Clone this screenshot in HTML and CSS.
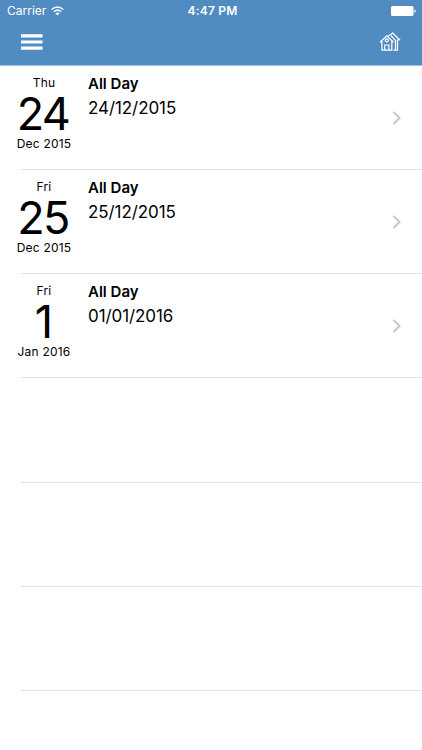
FILE: index.html
```html
<!DOCTYPE html>
<html lang="en">
<head>
<meta charset="utf-8">
<title>Events</title>
<link rel="stylesheet" href="styles.css">
</head>
<body>
<header class="header">
  <div class="status">
    <div class="carrier"><span>Carrier</span>
      <svg class="wifi" width="13" height="10" viewBox="0 0 13 10" fill="none" stroke="#fff" stroke-width="1.5"><path d="M.7 3.5Q6.5-1.6 12.3 3.5M2.8 5.7Q6.5 2.5 10.2 5.7"/><path d="M4.4 7.3Q6.5 5.6 8.6 7.3L6.5 9.5Z" fill="#fff" stroke="none"/></svg>
    </div>
    <div class="time">4:47 PM</div>
    <svg class="battery" width="25" height="10" viewBox="0 0 25 10" fill="#fff"><rect x="0" y="0" width="22.5" height="10" rx="1.5"/><path d="M23.4 3.2Q24.7 3.6 24.7 5T23.4 6.8Z"/></svg>
  </div>
  <nav class="nav">
    <svg width="22" height="17" viewBox="0 0 22 17" fill="#fff"><path d="M0 .3h21.5v3.1H0zM0 6.5h21.5v3.1H0zM0 12.6h21.5v3.1H0z"/></svg>
    <svg width="22" height="20" viewBox="0 0 22 20" fill="none" stroke="#fff" stroke-width="1.2"><path d="M1 10.2 7.8 3.8l6.7 6.4M2.9 9v9.2h9.9V9M5.7 18v-5h4.2v5"/><circle cx="7.8" cy="8.4" r="1.5"/><path d="M9.3 4.2 13.7 1l6.8 6.7-2 .4v10.1h-4.2M12 3.6l4.5 5v9.4"/></svg>
  </nav>
</header>
<main class="list">
  <article class="row">
    <div class="date"><span class="weekday">Thu</span><span class="day">24</span><span class="month">Dec 2015</span></div>
    <div class="info"><h2>All Day</h2><p>24/12/2015</p></div>
    <svg class="chevron" width="10" height="14" viewBox="0 0 10 14"><path d="m1.5 1 6 6-6 6"/></svg>
  </article>
  <article class="row">
    <div class="date"><span class="weekday">Fri</span><span class="day">25</span><span class="month">Dec 2015</span></div>
    <div class="info"><h2>All Day</h2><p>25/12/2015</p></div>
    <svg class="chevron" width="10" height="14" viewBox="0 0 10 14"><path d="m1.5 1 6 6-6 6"/></svg>
  </article>
  <article class="row">
    <div class="date"><span class="weekday">Fri</span><span class="day">1</span><span class="month">Jan 2016</span></div>
    <div class="info"><h2>All Day</h2><p>01/01/2016</p></div>
    <svg class="chevron" width="10" height="14" viewBox="0 0 10 14"><path d="m1.5 1 6 6-6 6"/></svg>
  </article>
  <div class="row"></div>
  <div class="row"></div>
  <div class="row"></div>
</main>
</body>
</html>
```
FILE: styles.css
```css
* { box-sizing: border-box; }
body { margin: 0; height: 750px; overflow: hidden; background: #fff; color: #000; font-family: Inter, "Liberation Sans", sans-serif; }
.header { height: 66px; background: #508cc1; border-bottom: 1px solid #9fc4e6; color: #fff; }
.status { display: grid; grid-template-columns: 1fr auto 1fr; align-items: center; height: 21px; padding: 0 6px 0 7px; }
.carrier { display: flex; align-items: center; gap: 5px; font-size: 12px; letter-spacing: 0; }
.time { font-size: 12px; font-weight: 600; letter-spacing: .2px; padding-left: 2px; }
.battery { justify-self: end; }
.nav { display: flex; justify-content: space-between; align-items: center; height: 42px; padding: 0 21px; }
.list { display: flex; flex-direction: column; }
.row { display: flex; align-items: flex-start; height: 104.17px; background: linear-gradient(#e3e3e5, #e3e3e5) 21px 100% / 100% 1px no-repeat; }
.date { display: flex; flex-direction: column; align-items: center; width: 88px; padding-top: 9px; }
.weekday, .month { font-size: 12px; line-height: 16px; letter-spacing: .2px; }
.day { font-size: 45px; line-height: 45px; letter-spacing: -1.6px; padding-right: 2px; }
.info { flex: 1; padding-top: 8px; }
h2 { margin: 0; font-size: 15px; line-height: 20px; font-weight: 600; }
p { margin: 3px 0 0; font-size: 17px; line-height: 22px; letter-spacing: -.08px; }
.chevron { align-self: center; margin-right: 20px; fill: none; stroke: #c7c7cc; stroke-width: 2; }
```
